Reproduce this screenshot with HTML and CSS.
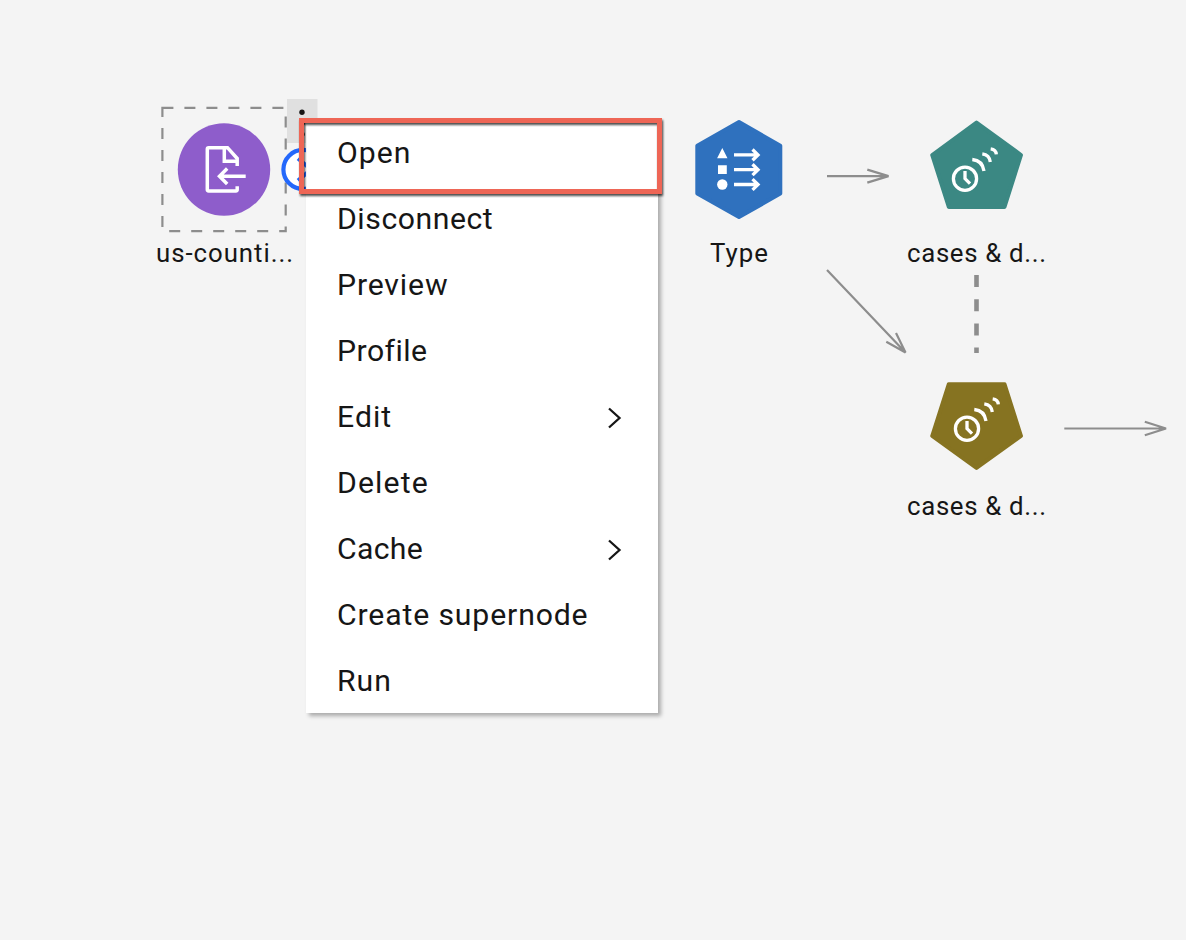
FILE: index.html
```html
<!DOCTYPE html>
<html lang="en">
<head>
<meta charset="utf-8">
<title>Flow editor</title>
<link rel="stylesheet" href="styles.css">
</head>
<body>
<main class="canvas">
  <svg class="flow" width="1186" height="940" viewBox="0 0 1186 940">
    <defs>
      <g id="clock" class="glyph">
        <circle cx="965" cy="178.7" r="11.6"/>
        <path d="M965 171v7.600l5 5M972.300 159.500Q982.500 160.500 984 171M982.300 153.900Q989.500 155 990.300 162M990.700 148.800Q996 149.500 996.300 154.300"/>
      </g>
    </defs>

    <!-- data import node -->
    <rect class="selection" x="162.400" y="107.900" width="123.300" height="123.200"/>
    <circle cx="224" cy="169.500" r="46.200" fill="#8e5dcb"/>
    <g class="glyph import">
      <path d="M237.200 186.200V189.600Q237.200 191 235.800 191H208.700Q207.300 191 207.300 189.600V149.100Q207.300 147.700 208.700 147.700H227.500L237.200 158.500V166M224.300 148V161.200H237"/>
      <path d="M245.700 176.200H219.500M227.200 168.500L219.500 176.200L227.200 183.900"/>
    </g>
    <rect x="287" y="99" width="30.500" height="44" fill="#e0e0e0"/>
    <circle cx="302" cy="112.300" r="2.700" fill="#161616"/>
    <circle cx="302" cy="123.300" r="2.700" fill="#161616"/>
    <circle cx="302" cy="134.300" r="2.700" fill="#161616"/>
    <circle class="port" cx="303" cy="169.500" r="19.600"/>
    <path class="port-arrow" d="M298 158.500L311 169.500L298 180.500"/>
    <text x="156" y="262" textLength="137">us-counti...</text>

    <!-- type node -->
    <path class="shape" fill="#2f71be" stroke="#2f71be" d="M739 122L780.300 145.700V193.600L739 217L697.300 193.600V145.700Z"/>
    <path fill="#fff" d="M722.300 148L727.500 158.200H717.100ZM718 165.200h8.800v8.800H718Z"/>
    <circle cx="722.300" cy="184.500" r="5.200" fill="#fff"/>
    <path class="glyph" d="M734 154.900H758M752.500 149.500L758 154.900L752.500 160.300M734 169.700H758M752.500 164.300L758 169.700L752.500 175.100M734 184.500H758M752.500 179.100L758 184.500L752.500 189.900"/>
    <text x="710" y="262" textLength="58">Type</text>

    <!-- time series nodes -->
    <path class="shape" fill="#3b8883" stroke="#3b8883" d="M976.500 122.500L1021 155L1004.500 207H948.800L932.200 155Z"/>
    <use href="#clock"/>
    <text x="907" y="262" textLength="139">cases &amp; d...</text>
    <path class="shape" fill="#867321" stroke="#867321" d="M948.800 384.200H1004.500L1021 436L976.500 468L932.200 436Z"/>
    <use href="#clock" x="2" y="250"/>
    <text x="907" y="515" textLength="139">cases &amp; d...</text>

    <!-- links -->
    <path class="link" d="M827 176.100H888.500M867.300 169.600L888.500 176.100L867.300 182.600M827 270L905.500 352.500M896 333L905.500 352.500L886.300 341.800M1064.300 428.500H1166M1144.800 421.800L1166 428.500L1144.800 435.200"/>
    <path class="association" d="M976.500 275V353"/>
  </svg>

  <nav class="menu">
    <div class="item open"><span>Open</span></div>
    <div class="item disconnect"><span>Disconnect</span></div>
    <div class="item preview"><span>Preview</span></div>
    <div class="item profile"><span>Profile</span></div>
    <div class="item edit"><span>Edit</span><svg class="chevron" width="16" height="24" viewBox="0 0 16 24"><path d="M3 2.500L13.500 12L3 21.500"/></svg></div>
    <div class="item delete"><span>Delete</span></div>
    <div class="item cache"><span>Cache</span><svg class="chevron" width="16" height="24" viewBox="0 0 16 24"><path d="M3 2.500L13.500 12L3 21.500"/></svg></div>
    <div class="item supernode"><span>Create supernode</span></div>
    <div class="item run"><span>Run</span></div>
  </nav>
  <div class="highlight"></div>
</main>
</body>
</html>
```
FILE: styles.css
```css
* { box-sizing: border-box; }

body {
  margin: 0;
  background: #f4f4f4;
  color: #161616;
  font-family: Roboto, "Liberation Sans", sans-serif;
}

.canvas {
  position: relative;
  width: 1186px;
  height: 940px;
  overflow: hidden;
}

.flow { display: block; }
.flow text { font-size: 25.800px; fill: #161616; }

.glyph { fill: none; stroke: #fff; stroke-width: 3.300; }
.import { stroke-width: 3.500; }
.shape { stroke-width: 4; stroke-linejoin: round; }
.selection { fill: none; stroke: #8d8d8d; stroke-width: 2.200; stroke-dasharray: 11; }
.port { fill: #fff; stroke: #2468fb; stroke-width: 4.200; }
.port-arrow { fill: none; stroke: #2468fb; stroke-width: 4; }
.link { fill: none; stroke: #8d8d8d; stroke-width: 2.200; stroke-linejoin: bevel; }
.association { fill: none; stroke: #8d8d8d; stroke-width: 4.600; stroke-dasharray: 12 12.200; }

.menu {
  position: absolute;
  left: 306px;
  top: 119px;
  width: 352px;
  background: #fff;
  box-shadow: 3px 3px 4px rgba(0, 0, 0, .3);
}

.item {
  display: flex;
  align-items: center;
  justify-content: space-between;
  height: 66px;
  padding: 2px 36px 0 31px;
  font-size: 30.200px;
  line-height: 36px;
  white-space: nowrap;
}

.chevron { margin-top: 2px; fill: none; stroke: #161616; stroke-width: 2.300; }

.open, .edit, .run { letter-spacing: 1px; }
.preview { letter-spacing: .85px; }
.disconnect { letter-spacing: .55px; }
.profile { letter-spacing: .45px; }
.delete { letter-spacing: 1.150px; }
.cache { letter-spacing: .3px; }
.supernode { letter-spacing: .86px; }

.highlight {
  position: absolute;
  left: 299px;
  top: 118px;
  width: 363px;
  height: 76px;
  border: 5px solid #ee6656;
  filter: drop-shadow(1px 2.500px 1px rgba(0, 0, 0, .7));
}
```
